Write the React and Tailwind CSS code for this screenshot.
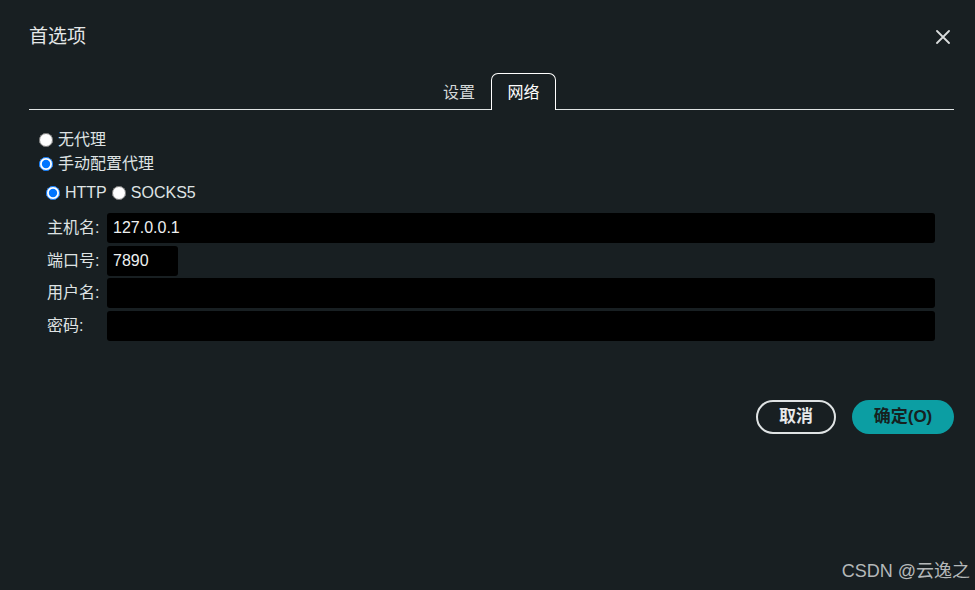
import React, { useState } from "react";

const Field = ({ label, value, width }) => (
  <div className="flex items-center h-[30px]">
    <span className="w-[60px] text-[16px] text-[#dfe3e4]">{label}</span>
    <div
      className={`h-[30px] ${width} bg-black rounded-[3px] pl-[6px] flex items-center text-[16px] text-[#eef0f0]`}
      style={{ fontFamily: '"Liberation Sans", Arial, sans-serif' }}
    >
      {value}
    </div>
  </div>
);

const App = () => {
  const [tab, setTab] = useState("net");
  const [mode, setMode] = useState("manual");
  const [proto, setProto] = useState("http");

  return (
    <div
      className="relative w-full h-[590px] bg-[#181f22] text-[#dfe3e4] overflow-hidden"
      style={{ fontFamily: '"Liberation Sans", "Noto Sans CJK SC", sans-serif' }}
    >
      {/* header */}
      <div className="flex items-center justify-between pl-[29px] pr-[24px] pt-[24px] h-[49px]">
        <h1 className="text-[19px] leading-[28px] text-[#e4e7e8]">首选项</h1>
        <button className="w-[16px] h-[16px] flex items-center justify-center">
          <svg width="14" height="14" viewBox="0 0 14 14" fill="none">
            <path d="M1 1L13 13M13 1L1 13" stroke="#d9dcdd" strokeWidth="1.8" strokeLinecap="round" />
          </svg>
        </button>
      </div>

      {/* tabs */}
      <div className="ml-[29px] mr-[21px] mt-[24px] flex justify-center border-b border-[#dfe3e4] h-[37px]">
        <button
          onClick={() => setTab("settings")}
          className={`w-[64px] h-[37px] -mb-px text-[16px] flex items-center justify-center pt-[2px] ${
            tab === "settings" ? "border border-b-0 border-white rounded-t-[7px] bg-[#181f22] text-white" : "text-[#d4d8d9]"
          }`}
        >
          设置
        </button>
        <button
          onClick={() => setTab("net")}
          className={`w-[65px] h-[37px] -mb-px text-[16px] flex items-center justify-center pt-[2px] ${
            tab === "net" ? "border border-b-0 border-white rounded-t-[7px] bg-[#181f22] text-white" : "text-[#d4d8d9]"
          }`}
        >
          网络
        </button>
      </div>

      {/* proxy options */}
      <div className="pl-[39px] pt-[18px] text-[16px]">
        <label className="flex items-center h-[24px] gap-[5px]">
          <input
            type="radio"
            name="mode"
            className="m-0 w-[14px] h-[14px]"
            checked={mode === "none"}
            onChange={() => setMode("none")}
          />
          无代理
        </label>
        <label className="flex items-center h-[24px] gap-[5px]">
          <input
            type="radio"
            name="mode"
            className="m-0 w-[14px] h-[14px]"
            checked={mode === "manual"}
            onChange={() => setMode("manual")}
          />
          手动配置代理
        </label>

        <div className="flex items-center h-[24px] mt-[5px] pl-[7px]">
          <label className="flex items-center gap-[5px]">
            <input
              type="radio"
              name="proto"
              className="m-0 w-[14px] h-[14px]"
              checked={proto === "http"}
              onChange={() => setProto("http")}
            />
            HTTP
          </label>
          <label className="flex items-center gap-[5px] ml-[5px]">
            <input
              type="radio"
              name="proto"
              className="m-0 w-[14px] h-[14px]"
              checked={proto === "socks"}
              onChange={() => setProto("socks")}
            />
            SOCKS5
          </label>
        </div>
      </div>

      <div className="pl-[47px] pr-[40px] mt-[8px] flex flex-col gap-[2.67px]">
        <Field label="主机名:" value="127.0.0.1" width="flex-1" />
        <Field label="端口号:" value="7890" width="w-[71px]" />
        <Field label="用户名:" value="" width="flex-1" />
        <Field label="密码:" value="" width="flex-1" />
      </div>

      {/* actions */}
      <div className="flex justify-end gap-[16px] pr-[21px] mt-[59px]">
        <button className="w-[80px] h-[34px] rounded-full border-2 border-[#dfe3e4] text-[17px] font-bold text-[#e6e8e9]">
          取消
        </button>
        <button className="w-[102px] h-[34px] rounded-full bg-[#0c9ea3] text-[17px] font-bold text-[#16211f]">
          确定(O)
        </button>
      </div>

      <div className="absolute right-[5px] bottom-[5px] text-[18px] text-[#b4b8b9]">CSDN @云逸之</div>
    </div>
  );
};

export default App;
